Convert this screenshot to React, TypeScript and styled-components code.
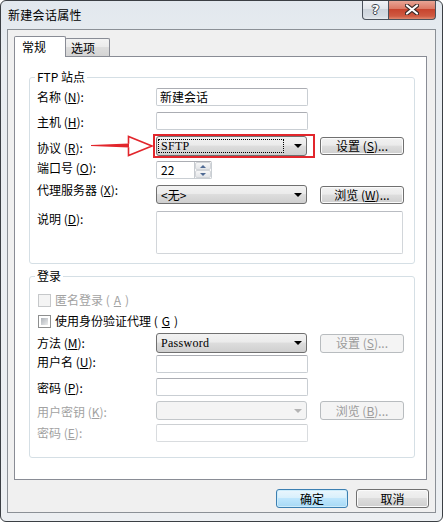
import React from "react";
import styled, { createGlobalStyle, css } from "styled-components";

const GlobalStyle = createGlobalStyle`
  html, body { margin: 0; padding: 0; background: #ffffff; }
  body {
    font-family: "Noto Sans CJK SC", "Noto Sans", sans-serif;
    font-size: 12px;
    color: #000;
  }
  * { box-sizing: border-box; }
`;

const Window = styled.div`
  position: relative;
  width: 443px;
  height: 522px;
  border: 1px solid #3b3f44;
  border-radius: 6px;
  background: linear-gradient(#e2e8ee, #e9edf1 60px, #eceff2);
  display: flex;
  flex-direction: column;
  padding: 0 6px 8px 6px;
  overflow: hidden;
`;

const TitleBar = styled.div`
  height: 28px;
  display: flex;
  align-items: flex-start;
  flex-shrink: 0;
`;

const TitleText = styled.div`
  align-self: center;
  padding-left: 1px;
  line-height: 14px;
  letter-spacing: 0.3px;
`;

const CaptionButton = styled.div<{ $close?: boolean }>`
  margin-top: -1px;
  height: 20px;
  display: flex;
  align-items: center;
  justify-content: center;
  border: 1px solid #4b525c;
  border-top: none;
  ${(p) =>
    p.$close
      ? css`
          width: 47px;
          border-left: none;
          border-radius: 0 0 4px 0;
          background: linear-gradient(#e9aa9b, #dc7a66 45%, #c7442e 50%, #cf5a42 85%, #e08a70);
        `
      : css`
          margin-left: auto;
          width: 27px;
          border-radius: 0 0 0 4px;
          background: linear-gradient(#f3f5f8, #e2e6eb 45%, #cdd4dc 50%, #d6dce3 85%, #e6eaee);
        `}
`;

const HelpGlyph = styled.span`
  font-family: "DejaVu Sans", sans-serif;
  font-weight: bold;
  font-size: 13px;
  line-height: 13px;
  color: #ffffff;
  text-shadow: 1px 0 0 #3c434c, -1px 0 0 #3c434c, 0 1px 0 #3c434c, 0 -1px 0 #3c434c;
`;

const Client = styled.div`
  height: 484px;
  border: 1px solid #8b9096;
  background: #f0f0f0;
  padding: 6px 8px 4px 6px;
  display: flex;
  flex-direction: column;
`;

const TabStrip = styled.div`
  display: flex;
  align-items: flex-start;
  height: 20px;
  position: relative;
  z-index: 1;
`;

const Tab = styled.div<{ $active?: boolean }>`
  border: 1px solid #898c95;
  line-height: 16px;
  ${(p) =>
    p.$active
      ? css`
          width: 52px;
          height: 21px;
          border-bottom: none;
          background: #ffffff;
          padding: 2px 0 0 7px;
          border-radius: 2px 2px 0 0;
        `
      : css`
          width: 45px;
          height: 18px;
          margin-top: 2px;
          margin-left: -1px;
          border-bottom: none;
          padding: 1px 0 0 5px;
          border-radius: 2px 2px 0 0;
          background: linear-gradient(#f3f3f3, #ebebeb 45%, #dddddd 50%, #d4d4d4);
        `}
`;

const Panel = styled.div`
  height: 424px;
  border: 1px solid #898c95;
  background: #ffffff;
  padding: 13px 11px 0 14px;
`;

const Group = styled.fieldset<{ $mt?: number; $pt: number; $pb: number }>`
  margin: ${(p) => p.$mt ?? 0}px 0 0 0;
  border: 1px solid #d5dfe5;
  border-radius: 3px;
  padding: ${(p) => p.$pt}px 10px ${(p) => p.$pb}px 7px;
  min-width: 0;
`;

const Legend = styled.legend`
  padding: 0 2px;
  margin-left: -2px;
  line-height: 14px;
  font-size: 12px;
`;

const FieldRow = styled.div<{ $h: number; $mt?: number }>`
  display: grid;
  grid-template-columns: 119px 164px 84px;
  align-items: center;
  height: ${(p) => p.$h}px;
  margin-top: ${(p) => p.$mt ?? 0}px;
`;

const Label = styled.div<{ $dy?: number; $disabled?: boolean }>`
  align-self: start;
  margin-top: ${(p) => p.$dy ?? 0}px;
  line-height: 14px;
  white-space: nowrap;
  color: ${(p) => (p.$disabled ? "#a2a2a2" : "#000")};
`;

const Key = styled.span`
  text-decoration: underline;
  text-underline-offset: 1px;
`;

const TextBox = styled.div<{ $w: number; $disabled?: boolean }>`
  width: ${(p) => p.$w}px;
  height: 100%;
  border: 1px solid ${(p) => (p.$disabled ? "#d9dcdf" : "#c9ced3")};
  border-top-color: ${(p) => (p.$disabled ? "#cdd0d3" : "#abadb3")};
  border-radius: 2px;
  background: #ffffff;
  padding: 0 3px;
  line-height: 16px;
  display: flex;
  align-items: center;
`;

const NumberBox = styled(TextBox)`
  padding: 0 0 0 4px;
  justify-content: space-between;
`;

const Spinner = styled.div`
  width: 17px;
  height: 100%;
  display: flex;
  flex-direction: column;
  border-left: 1px solid #c7cbd0;
`;

const SpinHalf = styled.div<{ $down?: boolean }>`
  flex: 1;
  display: flex;
  align-items: center;
  justify-content: center;
  background: linear-gradient(#f7f7f7, #e3e5e8);
  border: 1px solid #d2d5d9;
  border-radius: 2px;
  &::after {
    content: "";
    border-left: 3px solid transparent;
    border-right: 3px solid transparent;
    ${(p) =>
      p.$down
        ? css`border-top: 3px solid #4f6a94;`
        : css`border-bottom: 3px solid #4f6a94;`}
  }
`;

const TextArea = styled.div`
  grid-column: 2 / 4;
  width: 247px;
  height: 100%;
  border: 1px solid #d2d6da;
  border-top-color: #b9bcc2;
  border-radius: 2px;
  background: #ffffff;
`;

const Combo = styled.div<{ $h: number; $disabled?: boolean }>`
  width: 151px;
  height: ${(p) => p.$h}px;
  border: 1px solid ${(p) => (p.$disabled ? "#c3c7ca" : "#707070")};
  border-radius: 3px;
  display: flex;
  align-items: center;
  padding-left: 1px;
  ${(p) =>
    p.$disabled
      ? css`background: #f4f4f4;`
      : css`background: linear-gradient(#f2f2f2, #ebebeb 45%, #dddddd 50%, #cfcfcf);`}
  &::after {
    content: "";
    margin-left: auto;
    margin-right: 4px;
    border-left: 4px solid transparent;
    border-right: 4px solid transparent;
    border-top: 4px solid ${(p) => (p.$disabled ? "#b4b4b4" : "#000")};
  }
`;

const ComboText = styled.span<{ $mono?: boolean; $focus?: boolean }>`
  flex: 1;
  height: 14px;
  margin-right: 10px;
  padding-left: 2px;
  line-height: 12px;
  border: 1px ${(p) => (p.$focus ? "dotted #000" : "solid transparent")};
  white-space: nowrap;
  ${(p) =>
    p.$mono &&
    css`
      font-family: "Liberation Serif", "DejaVu Serif", serif;
      font-size: 12px;
      letter-spacing: 0.3px;
    `}
`;

const Highlight = styled.div`
  margin-left: -3px;
  width: 162px;
  height: 24px;
  border: 2px solid #e2262c;
  padding: 0 0 0 1px;
`;

const DlgButton = styled.div<{ $h: number; $disabled?: boolean; $primary?: boolean; $w?: number }>`
  width: ${(p) => p.$w ?? 84}px;
  height: ${(p) => p.$h}px;
  border-radius: 3px;
  display: flex;
  align-items: center;
  justify-content: center;
  line-height: 14px;
  white-space: nowrap;
  ${(p) =>
    p.$disabled
      ? css`
          border: 1px solid #b8bcbf;
          background: #f4f4f4;
          color: #9b9b9b;
        `
      : p.$primary
      ? css`
          border: 1px solid #3c7fb1;
          background: linear-gradient(#eaf6fd, #d9f0fc 45%, #bee6fd 50%, #a7d9f5);
          box-shadow: inset 0 0 0 1px #cdecfb;
        `
      : css`
          border: 1px solid #707070;
          background: linear-gradient(#f2f2f2, #ebebeb 45%, #dddddd 50%, #cfcfcf);
          box-shadow: inset 0 0 0 1px #fbfbfb;
        `}
`;

const CheckRow = styled.div<{ $mt?: number; $disabled?: boolean }>`
  height: 18px;
  margin-top: ${(p) => p.$mt ?? 0}px;
  display: flex;
  align-items: center;
  gap: 4px;
  padding-left: 1px;
  line-height: 14px;
  color: ${(p) => (p.$disabled ? "#a2a2a2" : "#000")};
`;

const CheckBox = styled.span<{ $disabled?: boolean }>`
  width: 13px;
  height: 13px;
  border: 1px solid ${(p) => (p.$disabled ? "#c6c8ca" : "#8e8f8f")};
  background: ${(p) => (p.$disabled ? "#f4f4f4" : "#ffffff")};
  padding: 2px;
  flex-shrink: 0;
  &::after {
    content: "";
    display: block;
    width: 100%;
    height: 100%;
    background: ${(p) =>
      p.$disabled ? "#f4f4f4" : "linear-gradient(135deg, #aeb3b9, #dfe1e3 80%, #eeeeee)"};
  }
`;

const Footer = styled.div`
  margin-top: 9px;
  margin-right: -2px;
  display: flex;
  justify-content: flex-end;
  gap: 8px;
`;

const Annotation = styled.svg`
  position: absolute;
  left: 87px;
  top: 132px;
`;

export default function App() {
  return (
    <>
      <GlobalStyle />
      <Window>
        <TitleBar>
          <TitleText>新建会话属性</TitleText>
          <CaptionButton>
            <HelpGlyph>?</HelpGlyph>
          </CaptionButton>
          <CaptionButton $close>
            <svg width="14" height="11" viewBox="0 0 14 11">
              <path d="M2 1.5 L12 9.5 M12 1.5 L2 9.5" stroke="#3a2a28" strokeWidth="4.2" strokeLinecap="round" />
              <path d="M2 1.5 L12 9.5 M12 1.5 L2 9.5" stroke="#ffffff" strokeWidth="2.2" strokeLinecap="round" />
            </svg>
          </CaptionButton>
        </TitleBar>

        <Client>
          <TabStrip>
            <Tab $active>常规</Tab>
            <Tab>选项</Tab>
          </TabStrip>
          <Panel>
            <Group $pt={4} $pb={9}>
              <Legend>FTP 站点</Legend>
              <FieldRow $h={18}>
                <Label $dy={2}>名称 (<Key>N</Key>):</Label>
                <TextBox $w={152}>新建会话</TextBox>
              </FieldRow>
              <FieldRow $h={18} $mt={6}>
                <Label $dy={3}>主机 (<Key>H</Key>):</Label>
                <TextBox $w={152} />
              </FieldRow>
              <FieldRow $h={24} $mt={4}>
                <Label $dy={7}>协议 (<Key>R</Key>):</Label>
                <Highlight>
                  <Combo $h={20}>
                    <ComboText $mono $focus>SFTP</ComboText>
                  </Combo>
                </Highlight>
                <DlgButton $h={18}>设置 (<Key>S</Key>)...</DlgButton>
              </FieldRow>
              <FieldRow $h={17} $mt={3}>
                <Label $dy={0}>端口号 (<Key>O</Key>):</Label>
                <NumberBox $w={56}>
                  22
                  <Spinner>
                    <SpinHalf />
                    <SpinHalf $down />
                  </Spinner>
                </NumberBox>
              </FieldRow>
              <FieldRow $h={19} $mt={7}>
                <Label $dy={-2}>代理服务器 (<Key>X</Key>):</Label>
                <Combo $h={19}>
                  <ComboText>&lt;无&gt;</ComboText>
                </Combo>
                <DlgButton $h={18}>浏览 (<Key>W</Key>)...</DlgButton>
              </FieldRow>
              <FieldRow $h={43} $mt={7}>
                <Label $dy={1}>说明 (<Key>D</Key>):</Label>
                <TextArea />
              </FieldRow>
            </Group>

            <Group $mt={5} $pt={8} $pb={15}>
              <Legend>登录</Legend>
              <CheckRow $disabled>
                <CheckBox $disabled />
                匿名登录 (<Key>A</Key>)
              </CheckRow>
              <CheckRow $mt={3}>
                <CheckBox />
                使用身份验证代理 (<Key>G</Key>)
              </CheckRow>
              <FieldRow $h={20} $mt={3}>
                <Label $dy={3}>方法 (<Key>M</Key>):</Label>
                <Combo $h={20}>
                  <ComboText $mono>Password</ComboText>
                </Combo>
                <DlgButton $h={19} $disabled>设置 (<Key>S</Key>)...</DlgButton>
              </FieldRow>
              <FieldRow $h={18} $mt={2}>
                <Label $dy={0}>用户名 (<Key>U</Key>):</Label>
                <TextBox $w={152} />
              </FieldRow>
              <FieldRow $h={18} $mt={5}>
                <Label $dy={3}>密码 (<Key>P</Key>):</Label>
                <TextBox $w={152} />
              </FieldRow>
              <FieldRow $h={19} $mt={5}>
                <Label $dy={4} $disabled>用户密钥 (<Key>K</Key>):</Label>
                <Combo $h={19} $disabled>
                  <ComboText />
                </Combo>
                <DlgButton $h={19} $disabled>浏览 (<Key>B</Key>)...</DlgButton>
              </FieldRow>
              <FieldRow $h={18} $mt={4}>
                <Label $dy={2} $disabled>密码 (<Key>E</Key>):</Label>
                <TextBox $w={152} $disabled />
              </FieldRow>
            </Group>
          </Panel>
          <Footer>
            <DlgButton $h={19} $w={72} $primary>确定</DlgButton>
            <DlgButton $h={19} $w={73}>取消</DlgButton>
          </Footer>
        </Client>

        <Annotation width="68" height="26" viewBox="0 0 68 26">
          <polygon points="3,12 41,10.6 41,14.4 3,13" fill="#e2262c" />
          <polyline
            points="40.5,10.8 40.5,3.5 64,13 40.5,22.5 40.5,14.2"
            fill="none"
            stroke="#e2262c"
            strokeWidth="1.6"
            strokeLinejoin="miter"
          />
        </Annotation>
      </Window>
    </>
  );
}
